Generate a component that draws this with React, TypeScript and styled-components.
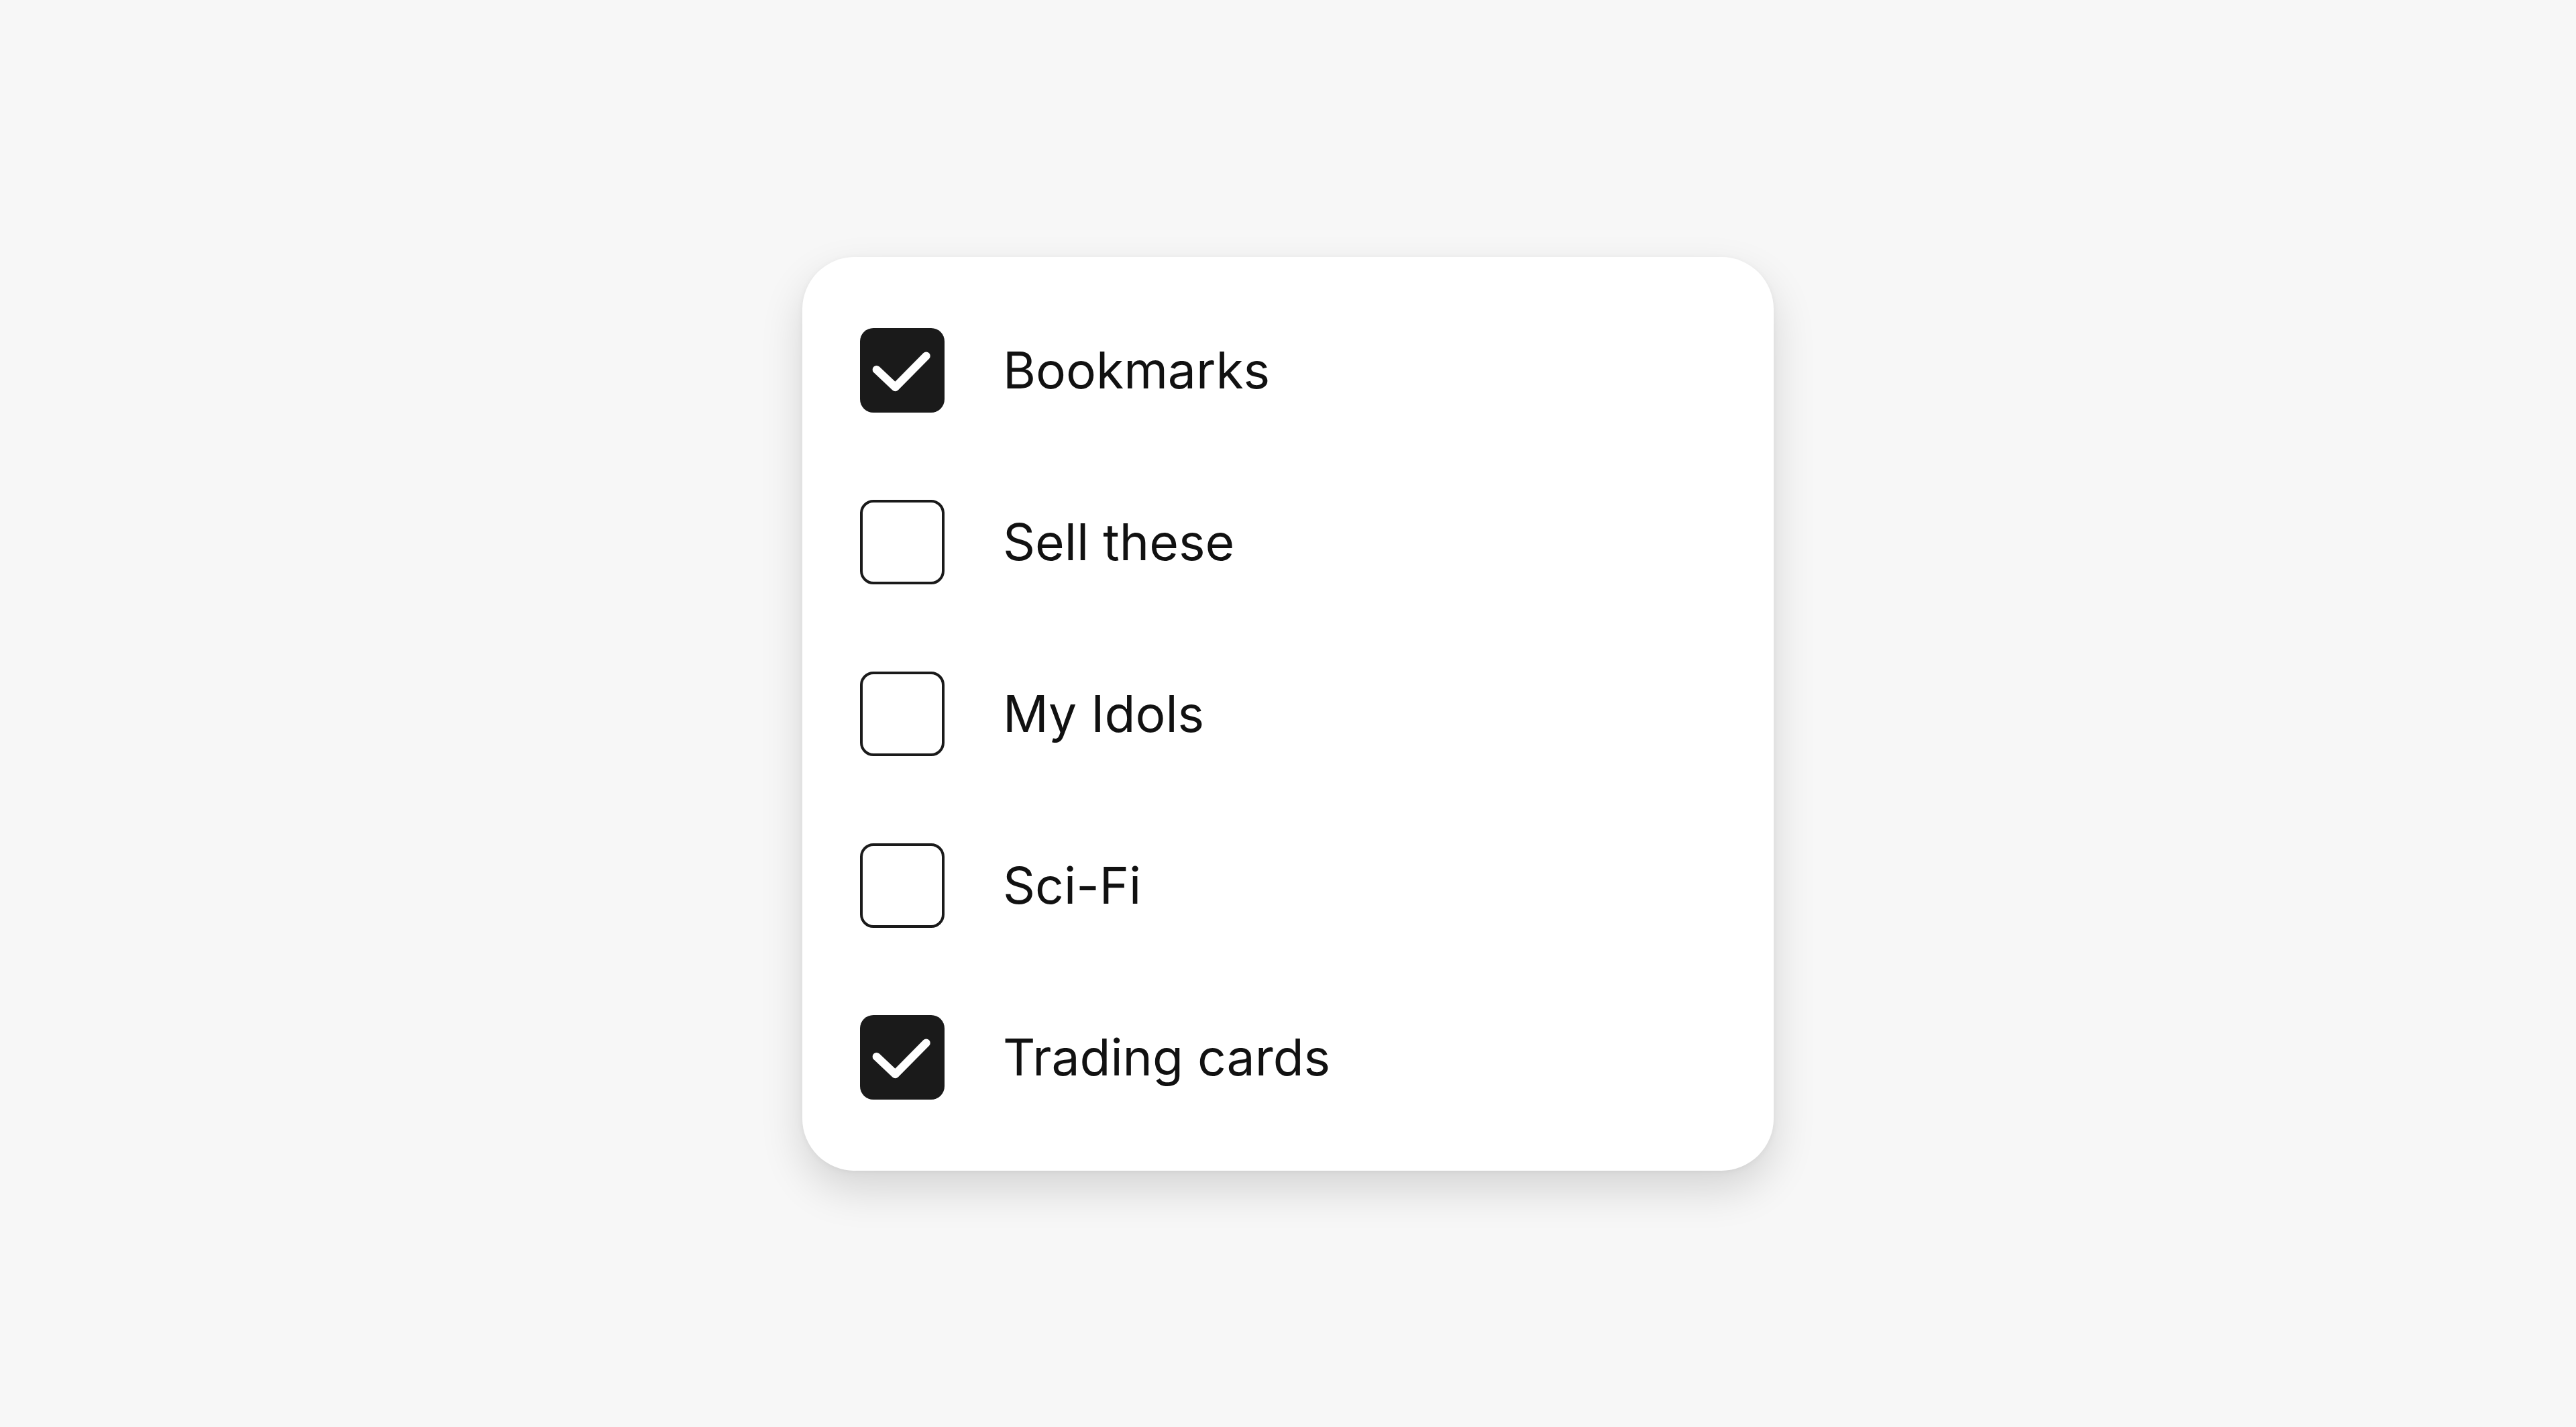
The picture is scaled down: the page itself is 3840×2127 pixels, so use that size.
import styled, { createGlobalStyle } from 'styled-components';

type Item = {
    label: string,
    checked: boolean
}

const items: Item[] = [
    { label: 'Bookmarks', checked: true },
    { label: 'Sell these', checked: false },
    { label: 'My Idols', checked: false },
    { label: 'Sci-Fi', checked: false },
    { label: 'Trading cards', checked: true },
];

const Check = () => (
    <svg width="100%" height="100%" viewBox="0 0 24 24" fill="none">
        <path d="M4.7 11.8 L10 16.8 L18.8 7.9" stroke="#fff" strokeWidth="2.3" strokeLinecap="round" strokeLinejoin="round" />
    </svg>
)

const App = () => {
    return (
        <>
            <GlobalStyle />
            <Page>
                <Card>
                    {items.map((item) => (
                        <Row key={item.label}>
                            <Box checked={item.checked}>
                                {item.checked && <Check />}
                            </Box>
                            <Label>{item.label}</Label>
                        </Row>
                    ))}
                </Card>
            </Page>
        </>
    )
}

export default App;


const GlobalStyle = createGlobalStyle`
    html, body {
        margin: 0;
        padding: 0;
        background: #f7f7f7;
    }
`;

const Page = styled.div`
    width: 100vw;
    height: 100vh;
    display: flex;
    align-items: center;
    justify-content: center;
    font-family: Inter, 'Liberation Sans', sans-serif;
`;

const Card = styled.div`
    width: 1448px;
    box-sizing: border-box;
    padding: 106px 86px;
    background: #ffffff;
    border-radius: 78px;
    display: flex;
    flex-direction: column;
    gap: 130px;
    box-shadow: 0 28px 64px rgba(0, 0, 0, 0.14), 0 2px 10px rgba(0, 0, 0, 0.05);
`;

const Row = styled.label`
    display: flex;
    align-items: center;
    gap: 87px;
    height: 126px;
`;

const Box = styled.span<{ checked: boolean }>`
    width: 126px;
    height: 126px;
    box-sizing: border-box;
    border-radius: 20px;
    flex-shrink: 0;
    background: ${(p) => (p.checked ? '#1a1a1a' : '#ffffff')};
    border: ${(p) => (p.checked ? 'none' : '4px solid #1a1a1a')};
    display: flex;
`;

const Label = styled.span`
    font-size: 75px;
    font-weight: 400;
    color: #111111;
    letter-spacing: 0;
`;
